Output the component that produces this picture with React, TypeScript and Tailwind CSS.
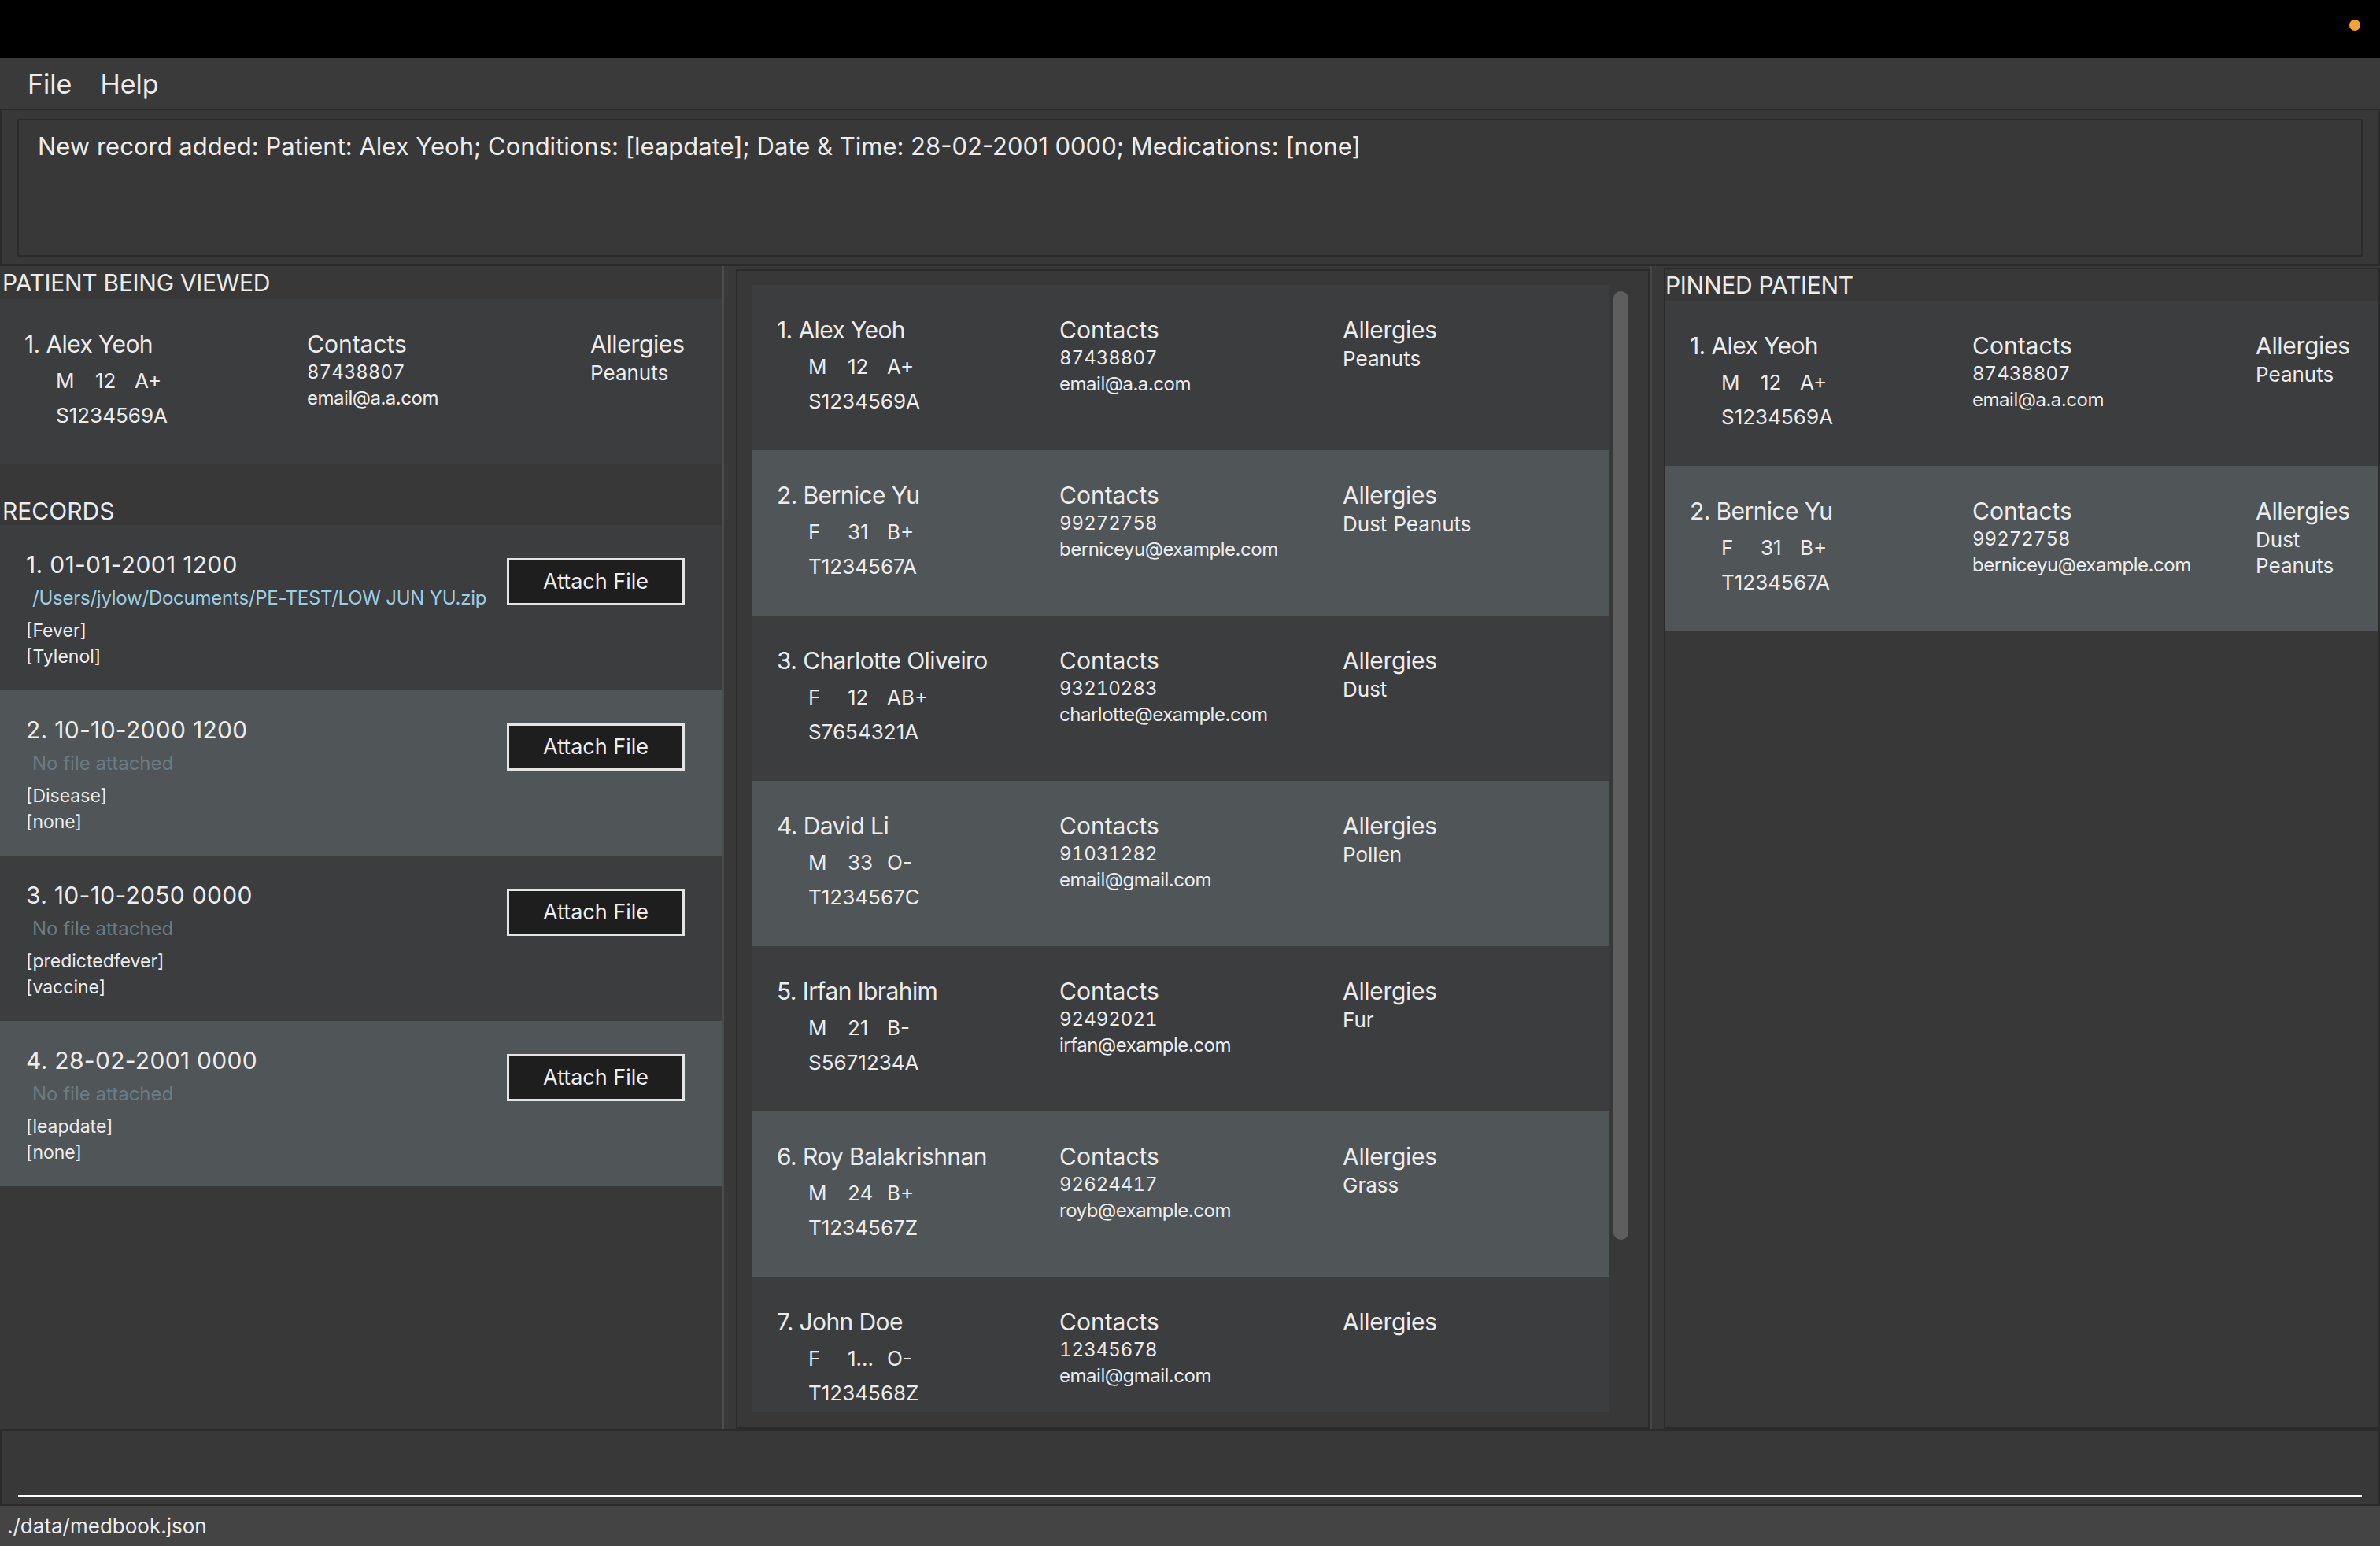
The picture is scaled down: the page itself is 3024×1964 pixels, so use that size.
const patients = [
  { name: "Alex Yeoh", sex: "M", age: "12", blood: "A+", nric: "S1234569A", phone: "87438807", email: "email@a.a.com", allergies: ["Peanuts"] },
  { name: "Bernice Yu", sex: "F", age: "31", blood: "B+", nric: "T1234567A", phone: "99272758", email: "berniceyu@example.com", allergies: ["Dust", "Peanuts"] },
  { name: "Charlotte Oliveiro", sex: "F", age: "12", blood: "AB+", nric: "S7654321A", phone: "93210283", email: "charlotte@example.com", allergies: ["Dust"] },
  { name: "David Li", sex: "M", age: "33", blood: "O-", nric: "T1234567C", phone: "91031282", email: "email@gmail.com", allergies: ["Pollen"] },
  { name: "Irfan Ibrahim", sex: "M", age: "21", blood: "B-", nric: "S5671234A", phone: "92492021", email: "irfan@example.com", allergies: ["Fur"] },
  { name: "Roy Balakrishnan", sex: "M", age: "24", blood: "B+", nric: "T1234567Z", phone: "92624417", email: "royb@example.com", allergies: ["Grass"] },
  { name: "John Doe", sex: "F", age: "1...", blood: "O-", nric: "T1234568Z", phone: "12345678", email: "email@gmail.com", allergies: [] as string[] },
];

const records = [
  { date: "01-01-2001 1200", file: "/Users/jylow/Documents/PE-TEST/LOW JUN YU.zip", conditions: "[Fever]", meds: "[Tylenol]" },
  { date: "10-10-2000 1200", file: null, conditions: "[Disease]", meds: "[none]" },
  { date: "10-10-2050 0000", file: null, conditions: "[predictedfever]", meds: "[vaccine]" },
  { date: "28-02-2001 0000", file: null, conditions: "[leapdate]", meds: "[none]" },
];

type Patient = (typeof patients)[number];

function PatientCard({ p, index, light }: { p: Patient; index: number; light: boolean }) {
  return (
    <div className={`h-[210px] shrink-0 pl-[31px] pt-[39px] flex ${light ? "bg-[#505557]" : "bg-[#3c3d3f]"}`}>
      <div className="w-[359px] shrink-0">
        <p className="text-[30px] leading-[36px] whitespace-nowrap tracking-[-0.02em]">{index}. {p.name}</p>
        <div className="mt-[13px] pl-[40px] flex text-[26px] leading-[32px]">
          <span className="w-[50px]">{p.sex}</span>
          <span className="w-[50px]">{p.age}</span>
          <span>{p.blood}</span>
        </div>
        <p className="mt-[12px] pl-[40px] text-[26px] leading-[32px]">{p.nric}</p>
      </div>
      <div className="w-[360px] shrink-0">
        <p className="text-[30px] leading-[36px]">Contacts</p>
        <p className="mt-[3px] text-[24px] leading-[30px] tabular-nums">{p.phone}</p>
        <p className="mt-[3px] text-[24px] leading-[30px] tracking-[-0.02em]">{p.email}</p>
      </div>
      <div className="flex-1 min-w-0 pr-[10px]">
        <p className="text-[30px] leading-[36px] tracking-[-0.01em]">Allergies</p>
        <div className="mt-[2px] flex flex-wrap gap-x-[8px] text-[26px] leading-[33px]">
          {p.allergies.map((a) => (
            <span key={a}>{a}</span>
          ))}
        </div>
      </div>
    </div>
  );
}

function RecordCard({ r, index, light }: { r: (typeof records)[number]; index: number; light: boolean }) {
  return (
    <div className={`h-[210px] shrink-0 pl-[33px] pr-[47px] pt-[33px] flex justify-between ${light ? "bg-[#505557]" : "bg-[#3c3d3f]"}`}>
      <div>
        <p className="text-[30px] leading-[34px] tracking-[0.01em]">{index}. {r.date}</p>
        {r.file ? (
          <p className="mt-[11px] pl-[8px] text-[24px] leading-[30px] tracking-[-0.01em] text-[#9dcde0]">{r.file}</p>
        ) : (
          <p className="mt-[11px] pl-[8px] text-[24px] leading-[30px] text-[#6b7b83]">No file attached</p>
        )}
        <p className="mt-[11px] text-[23px] leading-[30px]">{r.conditions}</p>
        <p className="mt-[3px] text-[23px] leading-[30px]">{r.meds}</p>
      </div>
      <button className="mt-[9px] w-[226px] h-[60px] border-[3px] border-[#e4e4e4] bg-[#1e1e1e] text-[27px] text-[#ededed]">
        Attach File
      </button>
    </div>
  );
}

export default function App() {
  return (
    <div className="w-[3024px] h-[1964px] flex flex-col bg-[#383838] text-[#ececec] font-['Inter',sans-serif] overflow-hidden">
      <div className="h-[74px] shrink-0 bg-black flex justify-end items-start pt-[25px] pr-[25px]">
        <span className="w-[14px] h-[14px] rounded-full bg-[#f4a433]" />
      </div>

      <div className="h-[64px] shrink-0 flex items-center gap-[36px] px-[35px] text-[34px] bg-[#3a3a3a]">
        <span>File</span>
        <span>Help</span>
      </div>

      <div className="h-[200px] shrink-0 border-2 border-[#2b2b2b] px-[20px] pt-[11px] pb-[10px]">
        <div className="h-full border-2 border-[#2b2b2b] px-[24px] pt-[14px] text-[31px] leading-[38px]">
          New record added: Patient: Alex Yeoh; Conditions: [leapdate]; Date &amp; Time: 28-02-2001 0000; Medications: [none]
        </div>
      </div>

      <div className="flex-1 min-h-0 flex">
        <div className="w-[917px] shrink-0 flex flex-col">
          <div className="h-[42px] shrink-0 flex items-center pl-[3px] text-[30px] tracking-[-0.01em]">PATIENT BEING VIEWED</div>
          <PatientCard p={patients[0]} index={1} light={false} />
          <div className="h-[77px] shrink-0 flex items-end pl-[3px] text-[30px] leading-[36px]">RECORDS</div>
          {records.map((r, i) => (
            <RecordCard key={r.date} r={r} index={i + 1} light={i % 2 === 1} />
          ))}
        </div>

        <div className="w-[3px] shrink-0 bg-[#4c4c4c]" />

        <div className="flex-1 min-w-0 flex pl-[15px] pt-[4px]">
          <div className="w-[1161px] shrink-0 border-2 border-[#2b2b2b] pl-[19px] pr-[25px] pt-[18px] pb-[19px] flex gap-[6px]">
            <div className="w-[1088px] shrink-0 flex flex-col overflow-hidden">
              {patients.map((p, i) => (
                <PatientCard key={p.name} p={p} index={i + 1} light={i % 2 === 1} />
              ))}
            </div>
            <div className="w-[19px] shrink-0 pt-[8px]">
              <div className="h-[1205px] rounded-full bg-[#5e5e5e]" />
            </div>
          </div>

          <div className="w-[3px] shrink-0 bg-[#454545] -mt-[4px]" />

          <div className="flex-1 min-w-0 ml-[15px] -mt-[2px] border-2 border-[#2b2b2b] flex flex-col">
            <div className="h-[40px] shrink-0 flex items-center text-[30px] tracking-[-0.01em]">PINNED PATIENT</div>
            <PatientCard p={patients[0]} index={1} light={false} />
            <PatientCard p={patients[1]} index={2} light={true} />
          </div>
        </div>
      </div>

      <div className="h-[98px] shrink-0 border-2 border-t-[3px] border-[#2b2b2b] px-[21px] pb-[9px] flex items-end">
        <div className="h-[3px] w-full bg-white" />
      </div>

      <div className="h-[51px] shrink-0 bg-[#444444] flex items-center px-[9px] text-[26px]">./data/medbook.json</div>
    </div>
  );
}
